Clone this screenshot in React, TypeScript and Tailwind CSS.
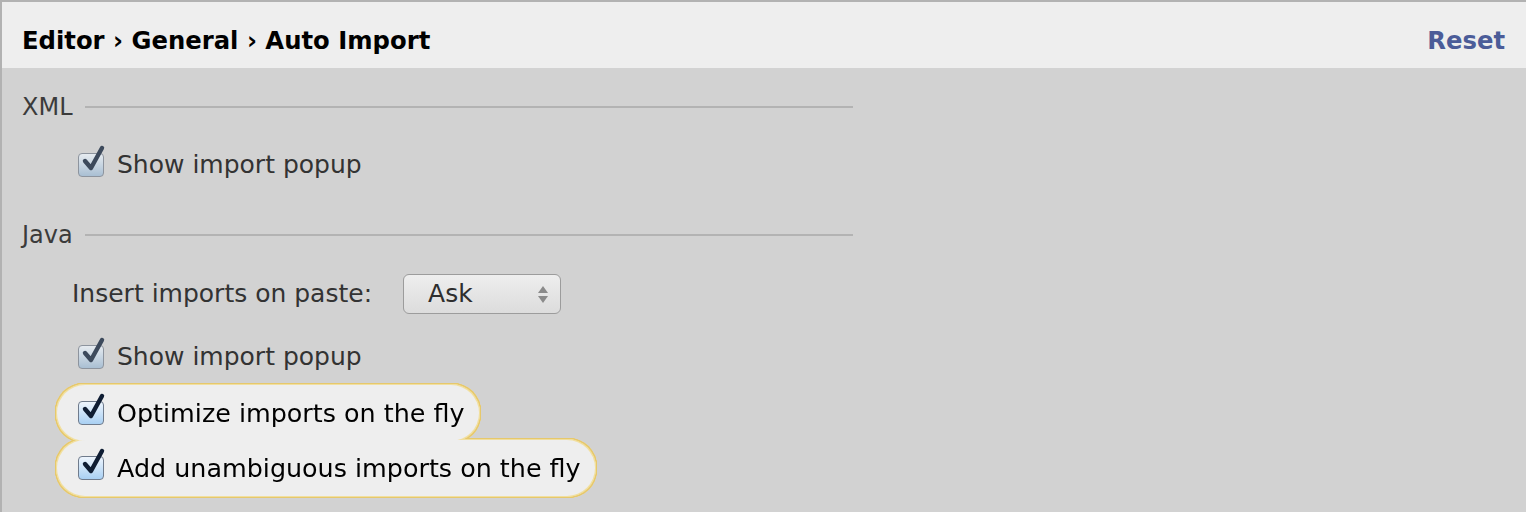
import React from 'react'

const font = "font-['DejaVu_Sans','Liberation_Sans',sans-serif]"

function Checkbox({ strong }: { strong?: boolean }) {
  return (
    <span className="relative inline-block w-[26px] h-[24px] shrink-0">
      <span
        className={
          strong
            ? 'absolute inset-0 rounded-[4px] border border-[#6f7b8c] bg-[linear-gradient(#eef5fd,#a9d0f3)]'
            : 'absolute inset-0 rounded-[4px] border border-[#8d949e] bg-[linear-gradient(#e6ebf0,#a9bfd3)]'
        }
      />
      <svg className="absolute left-[2px] top-[-9px] w-[26px] h-[30px]" viewBox="0 0 26 30" fill="none">
        <path
          d="M5 17 L11 24 L22 4"
          stroke={strong ? '#0f1d33' : '#3d4a5c'}
          strokeWidth="4.4"
          strokeLinecap="round"
          strokeLinejoin="round"
        />
      </svg>
    </span>
  )
}

function Section({ label }: { label: string }) {
  return (
    <div className="flex items-center h-[30px] w-[831px]">
      <span className="text-[24px] text-[#3b3b3b]">{label}</span>
      <span className="flex-1 ml-[12px] h-[2px] bg-[#b3b3b3]" />
    </div>
  )
}

function Row({ label, strong }: { label: string; strong?: boolean }) {
  return (
    <div className="flex items-center h-[40px] gap-[13px]">
      <Checkbox strong={strong} />
      <span className={strong ? 'text-[25.4px] text-black' : 'text-[25px] text-[#333333]'}>{label}</span>
    </div>
  )
}

export default function App() {
  return (
    <div className={`w-[1526px] h-[512px] overflow-hidden bg-[#d2d2d2] border-t-2 border-l-2 border-[#b2b2b2] ${font}`}>
      <header className="h-[66px] bg-[#eeeeee] flex items-center justify-between pt-[12px] pl-[20px] pr-[21px]">
        <span className="text-[24.3px] font-bold text-black">Editor › General › Auto Import</span>
        <span className="text-[24.3px] font-bold text-[#4b5c98]">Reset</span>
      </header>

      <div className="pl-[20px]">
        <div className="mt-[24px]">
          <Section label="XML" />
        </div>
        <div className="mt-[23px] ml-[56px]">
          <Row label="Show import popup" />
        </div>

        <div className="mt-[35px]">
          <Section label="Java" />
        </div>

        <div className="mt-[24px] ml-[50px] flex items-center h-[40px]">
          <span className="text-[25px] text-[#333333]">Insert imports on paste:</span>
          <div className="ml-[31px] w-[158px] h-[40px] rounded-[6px] border border-[#9c9c9c] bg-[linear-gradient(#eeeeee,#dcdcdc)] flex items-center justify-between pl-[24px] pr-[12px]">
            <span className="text-[25px] text-[#2e2e2e]">Ask</span>
            <span className="flex flex-col gap-[3px] items-center">
              <span className="w-0 h-0 border-l-[5px] border-r-[5px] border-b-[7px] border-l-transparent border-r-transparent border-b-[#8a8a8a]" />
              <span className="w-0 h-0 border-l-[5px] border-r-[5px] border-t-[7px] border-l-transparent border-r-transparent border-t-[#8a8a8a]" />
            </span>
          </div>
        </div>

        <div className="mt-[23px] ml-[56px]">
          <Row label="Show import popup" />
        </div>

        <div className="mt-[8px] ml-[35px] flex flex-col items-start [filter:drop-shadow(1px_0_0_#f1df9f)_drop-shadow(-1px_0_0_#f1df9f)_drop-shadow(0_1px_0_#f1df9f)_drop-shadow(0_-1px_0_#f1df9f)_drop-shadow(1px_0_0_#e6c86c)_drop-shadow(-1px_0_0_#e6c86c)_drop-shadow(0_1px_0_#e6c86c)_drop-shadow(0_-1px_0_#e6c86c)_drop-shadow(0_0_0.6px_#efd98f)]">
          <div className="w-[422px] h-[56px] rounded-full bg-[#eeeeee] flex items-center pl-[21px]">
            <Row label="Optimize imports on the fly" strong />
          </div>
          <div className="w-[538px] h-[56px] -mt-[1px] rounded-full bg-[#eeeeee] flex items-center pl-[21px]">
            <Row label="Add unambiguous imports on the fly" strong />
          </div>
        </div>
      </div>
    </div>
  )
}
